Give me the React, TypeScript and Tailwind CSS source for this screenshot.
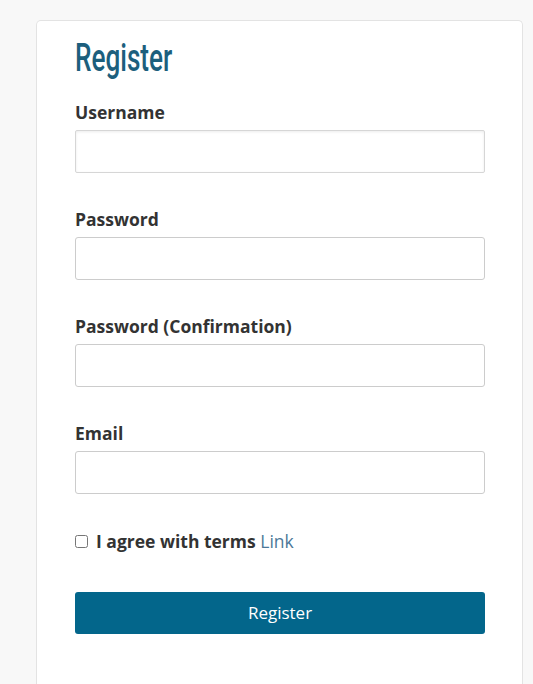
export default function App() {
  const fields = [
    { label: "Username", type: "text", shaded: true },
    { label: "Password", type: "password" },
    { label: "Password (Confirmation)", type: "password" },
    { label: "Email", type: "email" },
  ];

  return (
    <div className="min-h-[684px] bg-[#f8f8f8] pl-[36px] pt-[20px] font-['Open_Sans',sans-serif] text-[#333]">
      <div className="w-[487px] min-h-[680px] rounded-t-[5px] border border-b-0 border-[#e3e3e3] bg-white px-[38px] pt-[14px]">
        <h1 className="h-[44px] font-['Roboto',sans-serif] text-[39px] leading-[46px] font-medium text-[#1c5f7d]">
          <span className="inline-block origin-left scale-x-[0.67]">Register</span>
        </h1>
        <form className="mt-[22px]">
          {fields.map((f) => (
            <div key={f.label} className="mb-[35px]">
              <label className="block text-[17.5px] leading-[22px] font-bold">
                {f.label}
              </label>
              <input
                type={f.type}
                className={
                  f.shaded
                    ? "mt-[7px] block h-[43px] w-[410px] rounded-[2px] border border-[#d6d6d6] bg-white shadow-[inset_0_1px_3px_rgba(0,0,0,0.08)]"
                    : "mt-[7px] block h-[43px] w-[410px] rounded-[3px] border border-[#cccccc] bg-white"
                }
              />
            </div>
          ))}
          <div className="flex items-center gap-[8px]">
            <input type="checkbox" className="h-[13px] w-[13px] accent-gray-400" />
            <span className="text-[17.5px] leading-[24px]">
              <span className="font-bold">I agree with terms</span>{" "}
              <a className="text-[#4b7898]">Link</a>
            </span>
          </div>
          <button
            type="button"
            className="mt-[39px] h-[42px] w-[410px] rounded-[3px] bg-[#03668b] text-[17px] text-white"
          >
            Register
          </button>
        </form>
      </div>
    </div>
  );
}
